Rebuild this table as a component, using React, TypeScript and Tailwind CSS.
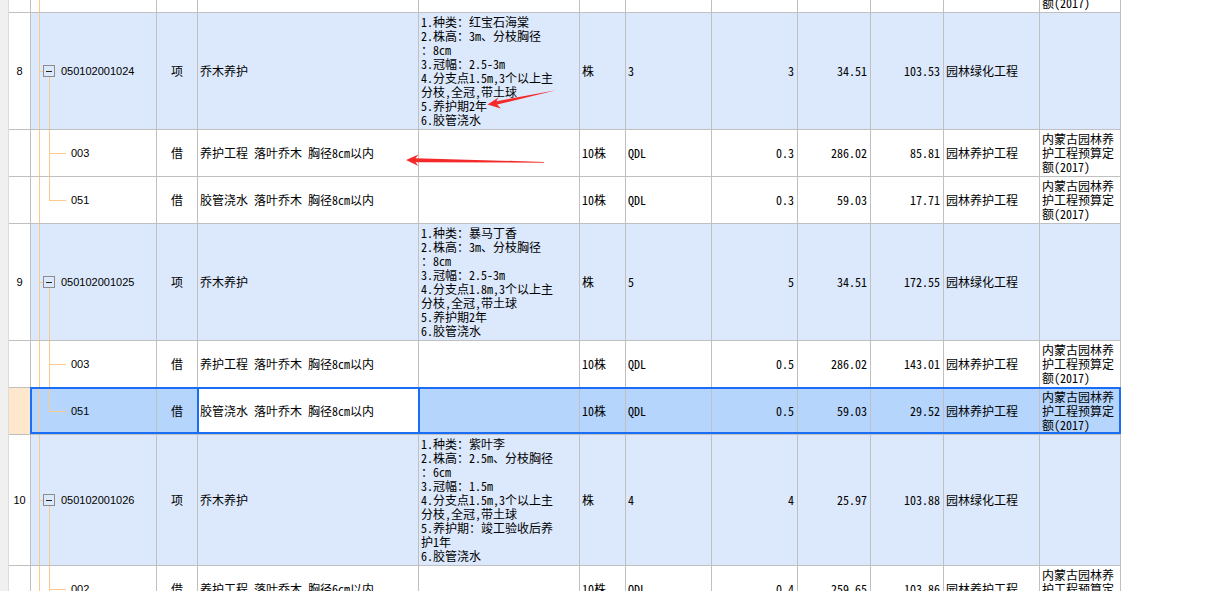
import clsx from 'clsx';

type Row = {
    kind: 'parent' | 'child';
    last?: boolean;
    num?: string;
    code: string;
    u1: string;
    name: string;
    desc?: string[];
    unit: string;
    expr: string;
    qty: string;
    price: string;
    total: string;
    cat: string;
    remark?: string[];
    h: string;
    selected?: boolean;
};

const REMARK = ['内蒙古园林养', '护工程预算定', '额(2017)'];

// first row is scrolled mostly out of view: only the last remark line shows
const rows: Row[] = [
    { kind: 'child', last: true, code: '', u1: '', name: '', unit: '', expr: '', qty: '', price: '', total: '', cat: '', remark: REMARK, h: 'h-[47px]' },
    {
        kind: 'parent', num: '8', code: '050102001024', u1: '项', name: '乔木养护',
        desc: ['1.种类：红宝石海棠', '2.株高：3m、分枝胸径', '：8cm', '3.冠幅：2.5-3m', '4.分支点1.5m,3个以上主', '分枝,全冠,带土球', '5.养护期2年', '6.胶管浇水'],
        unit: '株', expr: '3', qty: '3', price: '34.51', total: '103.53', cat: '园林绿化工程', h: 'h-[117px]',
    },
    { kind: 'child', code: '003', u1: '借', name: '养护工程 落叶乔木 胸径8cm以内', unit: '10株', expr: 'QDL', qty: '0.3', price: '286.02', total: '85.81', cat: '园林养护工程', remark: REMARK, h: 'h-[47px]' },
    { kind: 'child', last: true, code: '051', u1: '借', name: '胶管浇水 落叶乔木 胸径8cm以内', unit: '10株', expr: 'QDL', qty: '0.3', price: '59.03', total: '17.71', cat: '园林养护工程', remark: REMARK, h: 'h-[47px]' },
    {
        kind: 'parent', num: '9', code: '050102001025', u1: '项', name: '乔木养护',
        desc: ['1.种类：暴马丁香', '2.株高：3m、分枝胸径', '：8cm', '3.冠幅：2.5-3m', '4.分支点1.8m,3个以上主', '分枝,全冠,带土球', '5.养护期2年', '6.胶管浇水'],
        unit: '株', expr: '5', qty: '5', price: '34.51', total: '172.55', cat: '园林绿化工程', h: 'h-[117px]',
    },
    { kind: 'child', code: '003', u1: '借', name: '养护工程 落叶乔木 胸径8cm以内', unit: '10株', expr: 'QDL', qty: '0.5', price: '286.02', total: '143.01', cat: '园林养护工程', remark: REMARK, h: 'h-[47px]' },
    { kind: 'child', last: true, selected: true, code: '051', u1: '借', name: '胶管浇水 落叶乔木 胸径8cm以内', unit: '10株', expr: 'QDL', qty: '0.5', price: '59.03', total: '29.52', cat: '园林养护工程', remark: REMARK, h: 'h-[47px]' },
    {
        kind: 'parent', num: '10', code: '050102001026', u1: '项', name: '乔木养护',
        desc: ['1.种类：紫叶李', '2.株高：2.5m、分枝胸径', '：6cm', '3.冠幅：1.5m', '4.分支点1.5m,3个以上主', '分枝,全冠,带土球', '5.养护期：竣工验收后养', '护1年', '6.胶管浇水'],
        unit: '株', expr: '4', qty: '4', price: '25.97', total: '103.88', cat: '园林绿化工程', h: 'h-[131px]',
    },
    { kind: 'child', code: '002', u1: '借', name: '养护工程 落叶乔木 胸径6cm以内', unit: '10株', expr: 'QDL', qty: '0.4', price: '259.65', total: '103.86', cat: '园林养护工程', remark: REMARK, h: 'h-[47px]' },
];

const cell = 'flex shrink-0 items-center border-r border-b border-[#c0c0c0]';
const LINE = 'bg-[#fcc98b]';

function TreeCell({ row }: { row: Row }) {
    return (
        <div className={clsx(cell, 'relative w-[126px]')}>
            <div className={clsx('absolute left-[8px] top-0 bottom-0 w-px', LINE)} />
            {row.kind === 'parent' ? (
                <>
                    <div className={clsx('absolute left-[8px] top-1/2 h-px w-[5px]', LINE)} />
                    <div className={clsx('absolute left-[18px] top-[calc(50%+6px)] bottom-0 w-px', LINE)} />
                    <div className="absolute left-[12px] top-1/2 flex h-[12px] w-[12px] -translate-y-1/2 items-center justify-center border border-[#8c8c8c]">
                        <div className="h-px w-[6px] bg-[#222]" />
                    </div>
                    <span className="pl-[30px] font-['Liberation_Sans',sans-serif] text-[11px]">{row.code}</span>
                </>
            ) : (
                <>
                    <div className={clsx('absolute left-[18px] top-0 w-px', LINE, row.last ? 'h-1/2' : 'bottom-0')} />
                    <div className={clsx('absolute left-[18px] top-1/2 h-px w-[17px]', LINE)} />
                    {row.code && (
                        <span className="pl-[40px] font-['Liberation_Sans',sans-serif] text-[11px]">{row.code}</span>
                    )}
                </>
            )}
        </div>
    );
}

function Lines({ lines }: { lines?: string[] }) {
    if (!lines) return null;
    return (
        <div className="flex flex-col">
            {lines.map((l, i) => (
                <span key={i} className="h-[14px]">{l}</span>
            ))}
        </div>
    );
}

function GridRow({ row }: { row: Row }) {
    const bg = row.selected ? 'bg-[#b5d5fd]' : row.kind === 'parent' ? 'bg-[#dce9fc]' : 'bg-white';
    return (
        <div className={clsx('relative flex', row.h)}>
            <div className="w-[9px] shrink-0 border-r border-[#dcdcdc] bg-[#f0f0f0]" />
            <div className={clsx(cell, "w-[22px] justify-center font-['Liberation_Sans',sans-serif] text-[11px]", row.selected ? 'bg-[#fee8cd]' : 'bg-white')}>
                {row.num}
            </div>
            <div className={clsx('flex', bg)}>
                <TreeCell row={row} />
                <div className={clsx(cell, 'w-[41px] justify-center')}>{row.u1}</div>
                <div className={clsx(cell, 'w-[221px] pl-[2px]', row.selected && 'bg-white')}>{row.name}</div>
                <div className={clsx(cell, 'w-[161px] pl-[2px]')}>
                    <Lines lines={row.desc} />
                </div>
                <div className={clsx(cell, 'w-[46px] pl-[2px]')}>{row.unit}</div>
                <div className={clsx(cell, 'w-[86px] pl-[2px]')}>{row.expr}</div>
                <div className={clsx(cell, 'w-[86px] justify-end pr-[3px]')}>{row.qty}</div>
                <div className={clsx(cell, 'w-[73px] justify-end pr-[3px]')}>{row.price}</div>
                <div className={clsx(cell, 'w-[73px] justify-end pr-[3px]')}>{row.total}</div>
                <div className={clsx(cell, 'w-[96px] pl-[2px]')}>{row.cat}</div>
                <div className={clsx(cell, 'w-[81px] pl-[2px]')}>
                    <Lines lines={row.remark} />
                </div>
            </div>
            {row.selected && (
                <>
                    <div className="pointer-events-none absolute left-[30px] top-[-1px] h-[47px] w-[1091px] border-2 border-[#1a6ef5]" />
                    <div className="pointer-events-none absolute left-[197px] top-[-1px] h-[47px] w-[223px] border-2 border-[#1a6ef5]" />
                </>
            )}
        </div>
    );
}

export default function App() {
    return (
        <div className="relative h-[591px] w-[1209px] overflow-hidden bg-white font-['Noto_Sans_Mono_CJK_SC','Noto_Sans_CJK_SC',monospace] text-[12px] leading-[14px] text-black">
            <div className="-mt-[34px]">
                {rows.map((row, i) => (
                    <GridRow key={i} row={row} />
                ))}
            </div>
            {/* annotation arrows */}
            <svg className="pointer-events-none absolute left-0 top-0" width="1209" height="591">
                <polygon
                    points="487.5,104.5 500.8,108.6 497.2,104.6 556,90.2 496.4,101.2 498.4,97.6"
                    fill="#f42a2a"
                />
                <polygon
                    points="406,160 418.5,166 415.5,162.2 544,162.7 544,161.9 415.5,158.2 418.5,154.5"
                    fill="#f42a2a"
                />
            </svg>
        </div>
    );
}
